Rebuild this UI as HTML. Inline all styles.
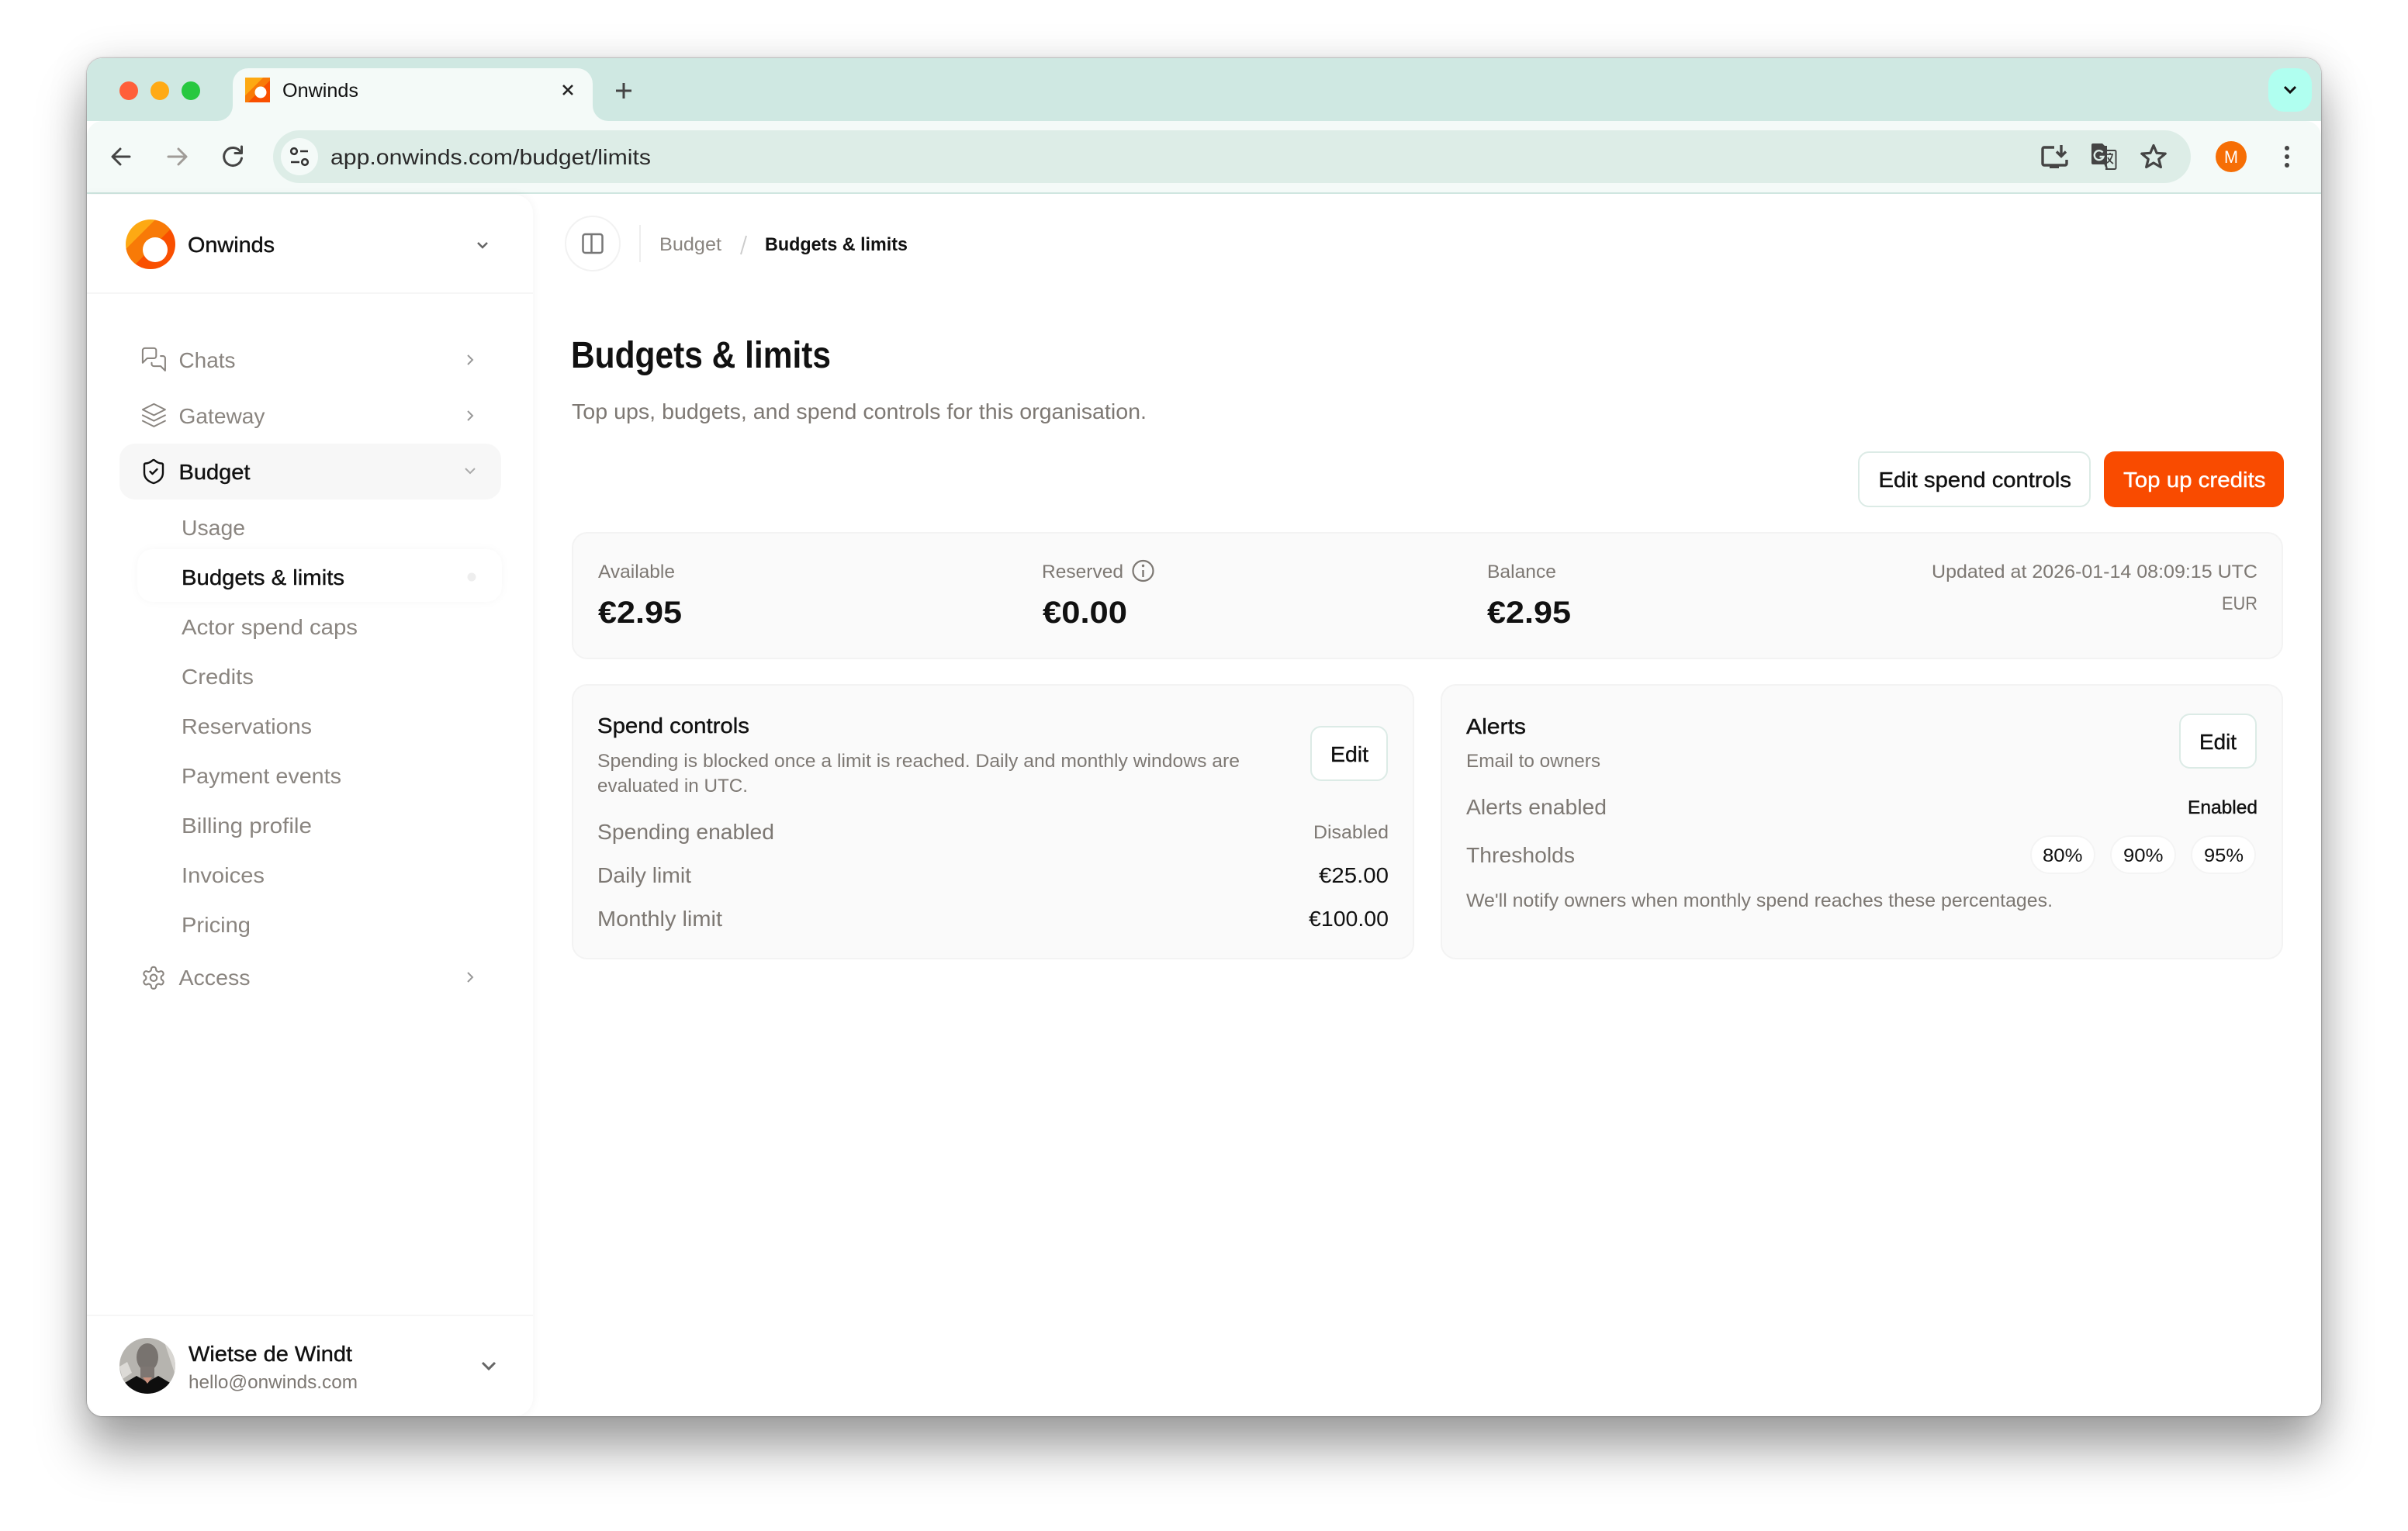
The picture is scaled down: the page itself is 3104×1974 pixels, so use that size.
<!DOCTYPE html>
<html lang="en">
<head>
<meta charset="utf-8">
<title>Onwinds</title>
<style>
html,body{margin:0;padding:0;background:#fff;width:3104px;height:1974px;overflow:hidden}
.a{position:absolute;box-sizing:border-box}
#shadow{left:112px;top:75px;width:2880px;height:1751px;border-radius:20px;box-shadow:0 0 0 1px rgba(0,0,0,.13),0 0 4px rgba(0,0,0,.16),0 44px 62px rgba(0,0,0,.34),0 4px 52px rgba(0,0,0,.13)}
#win{left:112px;top:75px;width:2880px;height:1751px;border-radius:20px;overflow:hidden;background:#fff}
svg{position:absolute;left:0;top:0}
text{font-family:"Liberation Sans",sans-serif;white-space:pre}
.m{stroke:currentColor;stroke-width:.4px}
.g{fill:#7d7873;color:#7d7873}
.n{fill:#8a8580;color:#8a8580}
.d{fill:#111;color:#111}
.s24{font-size:24px}.s28{font-size:28px}
.ic{fill:none;stroke-linecap:round;stroke-linejoin:round}
</style>
</head>
<body>
<div class="a" id="shadow"></div>
<div class="a" id="win">
  <div class="a" style="left:0;top:0;width:2880px;height:81px;background:#cfe8e2"></div>
  <div class="a" style="left:0;top:81px;width:2880px;height:94px;background:#f4faf8;border-radius:20px 20px 0 0;border-bottom:2px solid #cfe6e0"></div>
  <div class="a" style="left:188px;top:13px;width:464px;height:70px;background:#f4faf8;border-radius:20px 20px 0 0"></div>
  <div class="a" style="left:240px;top:93px;width:2472px;height:68px;background:#ddede7;border-radius:34px"></div>
  <div class="a" style="left:2812px;top:13px;width:56px;height:56px;background:#b0fff0;border-radius:20px"></div>
  <div class="a" style="left:0;top:176px;width:575px;height:1575px;background:#fff;border-radius:0 24px 24px 24px;box-shadow:0 0 12px rgba(0,0,0,.05)"></div>
  <div class="a" style="left:0;top:302px;width:575px;height:2px;background:#f6f6f6"></div>
  <div class="a" style="left:0;top:1620px;width:575px;height:2px;background:#f6f6f6"></div>
  <div class="a" style="left:42px;top:497px;width:492px;height:72px;background:#f7f7f7;border-radius:20px"></div>
  <div class="a" style="left:65px;top:633px;width:470px;height:68px;background:#fff;border-radius:20px;box-shadow:0 0 12px rgba(0,0,0,.035)"></div>
  <div class="a" style="left:616px;top:203px;width:72px;height:72px;background:#fff;border:2px solid #f2f2f2;border-radius:50%"></div>
  <div class="a" style="left:712px;top:215px;width:2px;height:48px;background:#eee"></div>
  <div class="a" style="left:2283px;top:507px;width:300px;height:72px;background:#fff;border:2px solid #dcebe6;border-radius:14px"></div>
  <div class="a" style="left:2600px;top:507px;width:232px;height:72px;background:#f94b00;border-radius:14px"></div>
  <div class="a" style="left:625px;top:611px;width:2206px;height:164px;background:#fafafa;border:2px solid #f3f3f3;border-radius:20px"></div>
  <div class="a" style="left:625px;top:807px;width:1086px;height:355px;background:#fafafa;border:2px solid #f3f3f3;border-radius:20px"></div>
  <div class="a" style="left:1745px;top:807px;width:1086px;height:355px;background:#fafafa;border:2px solid #f3f3f3;border-radius:20px"></div>
  <div class="a" style="left:1577px;top:861px;width:100px;height:71px;background:#fff;border:2px solid #dcebe6;border-radius:14px"></div>
  <div class="a" style="left:2697px;top:845px;width:100px;height:71px;background:#fff;border:2px solid #dcebe6;border-radius:14px"></div>
  <div class="a" style="left:2505px;top:1002px;width:84px;height:50px;background:#fff;border:2px solid #f4f4f4;border-radius:25px"></div>
  <div class="a" style="left:2608px;top:1002px;width:85px;height:50px;background:#fff;border:2px solid #f4f4f4;border-radius:25px"></div>
  <div class="a" style="left:2712px;top:1002px;width:84px;height:50px;background:#fff;border:2px solid #f4f4f4;border-radius:25px"></div>
</div>
<svg width="3104" height="1974" viewBox="0 0 3104 1974" xmlns="http://www.w3.org/2000/svg">
  <defs>
    <linearGradient id="lg" gradientUnits="userSpaceOnUse" x1="162" y1="283" x2="226" y2="347">
      <stop offset=".3" stop-color="#fda913"/><stop offset=".3" stop-color="#f87a07"/>
      <stop offset=".55" stop-color="#f87a07"/><stop offset=".55" stop-color="#f94f00"/>
    </linearGradient>
    <linearGradient id="fg" gradientUnits="userSpaceOnUse" x1="316" y1="100" x2="348" y2="132">
      <stop offset=".36" stop-color="#fda913"/><stop offset=".36" stop-color="#f87a07"/>
      <stop offset=".56" stop-color="#f87a07"/><stop offset=".56" stop-color="#f94f00"/>
    </linearGradient>
    <clipPath id="av"><circle cx="190" cy="1761" r="36"/></clipPath>
  </defs>

  <!-- tab strip flares -->
  <path d="M280 156a20 20 0 0 0 20-20v20z" fill="#f4faf8"/>
  <path d="M784 156a20 20 0 0 1-20-20v20z" fill="#f4faf8"/>

  <!-- traffic lights -->
  <circle cx="166" cy="117" r="12" fill="#ff5f3a"/>
  <circle cx="206" cy="117" r="12" fill="#ffaa15"/>
  <circle cx="246" cy="117" r="12" fill="#28c840"/>

  <!-- favicon and tab -->
  <rect x="316" y="100" width="32" height="32" fill="url(#fg)"/>
  <circle cx="336" cy="119" r="7.500" fill="#fff"/>
  <text x="364" y="125" class="d" style="font-size:25px" textLength="98" lengthAdjust="spacingAndGlyphs">Onwinds</text>
  <path d="M726 110l12 12M738 110l-12 12" stroke="#222" stroke-width="2.600" fill="none"/>
  <path d="M804 107v20M794 117h20" stroke="#444" stroke-width="3" fill="none"/>
  <path d="M2945 112l7 7 7-7" stroke="#111" stroke-width="3" fill="none"/>

  <!-- toolbar -->
  <g class="ic" stroke-width="3">
    <path d="M167 202H146M155 192l-10 10 10 10" stroke="#444"/>
    <path d="M239 202H217M230 192l10 10-10 10" stroke="#a09c98"/>
    <path d="M310 196a11.500 11.500 0 1 0 1.500 8" stroke="#444"/>
    <path d="M311.500 189v8.500H303" stroke="#444"/>
  </g>
  <circle cx="386" cy="202" r="24" fill="#f4faf8"/>
  <g fill="none" stroke="#333" stroke-width="2.600">
    <circle cx="379" cy="195" r="3.800"/>
    <path d="M387 195h10M375 209h11"/>
    <circle cx="393" cy="209" r="3.800"/>
  </g>
  <text x="426" y="212" fill="#2a2a2a" class="s28" textLength="413" lengthAdjust="spacingAndGlyphs">app.onwinds.com/budget/limits</text>

  <g fill="none" stroke="#444" stroke-width="3.400">
    <path d="M2648 190h-13a2 2 0 0 0-2 2v19a2 2 0 0 0 2 2h27a2 2 0 0 0 2-2v-5"/>
    <path d="M2657 187v14M2651 195.500l6 6 6-6"/>
  </g>
  <rect x="2642" y="212" width="12" height="5" fill="#444"/>
  <path d="M2696 187a2 2 0 0 1 2-2h12l3 3 3 0 0 3v21h-18a2 2 0 0 1-2-2z" fill="#444"/>
  <path d="M2712.500 194h13.500a1.500 1.500 0 0 1 1.500 1.500v21a1.500 1.500 0 0 1-1.500 1.500h-12" fill="none" stroke="#444" stroke-width="2"/>
  <path d="M2712 211l3 7h2l-1.500-7z" fill="#444"/>
  <path d="M2710.500 196.500a6 6 0 1 0 1 5.500h-5" fill="none" stroke="#ddede7" stroke-width="2.400"/>
  <path d="M2716 199h8M2720 197v2M2723 199c-1 5-4 9-7 11M2717 203c1.500 3 4 6 7 8" fill="none" stroke="#444" stroke-width="1.800"/>
  <polygon points="2776,187.500 2780.100,197.300 2791.200,198.100 2782.700,205.200 2785.400,215.500 2776,210 2766.600,215.500 2769.300,205.200 2760.800,198.100 2771.900,197.300" fill="none" stroke="#444" stroke-width="3.200" stroke-linejoin="round"/>
  <circle cx="2876" cy="202" r="20" fill="#f66e05"/>
  <text x="2867" y="210" fill="#fff" style="font-size:22px" textLength="18" lengthAdjust="spacingAndGlyphs">M</text>
  <circle cx="2948" cy="191" r="3" fill="#444"/><circle cx="2948" cy="202" r="3" fill="#444"/><circle cx="2948" cy="213" r="3" fill="#444"/>

  <!-- sidebar header -->
  <circle cx="194" cy="315" r="32" fill="url(#lg)"/>
  <circle cx="200" cy="322" r="16" fill="#fff"/>
  <text x="242" y="325" class="d s28 m" textLength="112" lengthAdjust="spacingAndGlyphs">Onwinds</text>
  <path d="M616 313l6 6 6-6" fill="none" stroke="#666" stroke-width="2.500"/>

  <!-- nav -->
  <g class="ic" stroke="#8a8580" stroke-width="1.400" transform="translate(181 446) scale(1.45)">
    <path d="M14 9a2 2 0 0 1-2 2H6l-4 4V4a2 2 0 0 1 2-2h8a2 2 0 0 1 2 2z"/>
    <path d="M18 9h2a2 2 0 0 1 2 2v11l-4-4h-6a2 2 0 0 1-2-2v-1"/>
  </g>
  <text x="230.500" y="474" class="n s28" textLength="73" lengthAdjust="spacingAndGlyphs">Chats</text>
  <path d="M603 458l6 6-6 6" fill="none" stroke="#999" stroke-width="2"/>

  <g class="ic" stroke="#8a8580" stroke-width="1.400" transform="translate(181 518) scale(1.45)">
    <path d="M12 2L22 7L12 12L2 7Z"/><path d="M2 12l10 5 10-5"/><path d="M2 17l10 5 10-5"/>
  </g>
  <text x="230.500" y="546" class="n s28" textLength="111" lengthAdjust="spacingAndGlyphs">Gateway</text>
  <path d="M603 530l6 6-6 6" fill="none" stroke="#999" stroke-width="2"/>

  <g class="ic" stroke="#111" stroke-width="1.600" transform="translate(180 590) scale(1.5)">
    <path d="M20 13c0 5-3.500 7.500-7.660 8.950a1 1 0 0 1-.67-.01C7.500 20.500 4 18 4 13V6a1 1 0 0 1 1-1c2 0 4.500-1.200 6.240-2.720a1.170 1.170 0 0 1 1.520 0C14.510 3.810 17 5 19 5a1 1 0 0 1 1 1z"/>
    <path d="M9 12l2 2 4-4"/>
  </g>
  <text x="230.500" y="618" class="d s28 m" textLength="92" lengthAdjust="spacingAndGlyphs">Budget</text>
  <path d="M600 604l6 6 6-6" fill="none" stroke="#aaa" stroke-width="2"/>

  <text x="234" y="690" class="n s28" textLength="82" lengthAdjust="spacingAndGlyphs">Usage</text>
  <text x="234" y="754" class="d s28 m" textLength="210" lengthAdjust="spacingAndGlyphs">Budgets &amp; limits</text>
  <circle cx="608" cy="744" r="5.500" fill="#eee"/>
  <text x="234" y="818" class="n s28" textLength="227" lengthAdjust="spacingAndGlyphs">Actor spend caps</text>
  <text x="234" y="882" class="n s28" textLength="93" lengthAdjust="spacingAndGlyphs">Credits</text>
  <text x="234" y="946" class="n s28" textLength="168" lengthAdjust="spacingAndGlyphs">Reservations</text>
  <text x="234" y="1010" class="n s28" textLength="206" lengthAdjust="spacingAndGlyphs">Payment events</text>
  <text x="234" y="1074" class="n s28" textLength="168" lengthAdjust="spacingAndGlyphs">Billing profile</text>
  <text x="234" y="1138" class="n s28" textLength="107" lengthAdjust="spacingAndGlyphs">Invoices</text>
  <text x="234" y="1202" class="n s28" textLength="89" lengthAdjust="spacingAndGlyphs">Pricing</text>

  <g class="ic" stroke="#8a8580" stroke-width="1.500" transform="translate(181.200 1244) scale(1.4)">
    <path d="M12.220 2h-.44a2 2 0 0 0-2 2v.18a2 2 0 0 1-1 1.730l-.43.25a2 2 0 0 1-2 0l-.15-.08a2 2 0 0 0-2.730.73l-.22.38a2 2 0 0 0 .73 2.730l.15.1a2 2 0 0 1 1 1.720v.51a2 2 0 0 1-1 1.740l-.15.09a2 2 0 0 0-.73 2.730l.22.38a2 2 0 0 0 2.730.73l.15-.08a2 2 0 0 1 2 0l.43.25a2 2 0 0 1 1 1.730V20a2 2 0 0 0 2 2h.44a2 2 0 0 0 2-2v-.18a2 2 0 0 1 1-1.730l.43-.25a2 2 0 0 1 2 0l.15.08a2 2 0 0 0 2.730-.73l.22-.39a2 2 0 0 0-.73-2.730l-.15-.08a2 2 0 0 1-1-1.740v-.5a2 2 0 0 1 1-1.740l.15-.09a2 2 0 0 0 .73-2.730l-.22-.38a2 2 0 0 0-2.730-.73l-.15.08a2 2 0 0 1-2 0l-.43-.25a2 2 0 0 1-1-1.730V4a2 2 0 0 0-2-2z"/>
    <circle cx="12" cy="12" r="3"/>
  </g>
  <text x="230.500" y="1270" class="n s28" textLength="92" lengthAdjust="spacingAndGlyphs">Access</text>
  <path d="M603 1254l6 6-6 6" fill="none" stroke="#999" stroke-width="2"/>

  <!-- user footer -->
  <g clip-path="url(#av)">
    <rect x="154" y="1725" width="72" height="72" fill="#b6b4af"/>
    <path d="M210 1725h16v48z" fill="#d8d6d2"/>
    <path d="M154 1762l10-6 6 14-12 8z" fill="#dcdad6"/>
    <ellipse cx="190" cy="1750" rx="14" ry="18" fill="#78736f"/>
    <rect x="181" y="1762" width="18" height="18" fill="#7d7672"/>
    <path d="M154 1797v-10l22-13 14 8 14-8 22 13v10z" fill="#0e0e0e"/>
    <path d="M184 1776l6 8 6-8z" fill="#c9917e"/>
  </g>
  <text x="243" y="1755" class="d s28 m" textLength="211" lengthAdjust="spacingAndGlyphs">Wietse de Windt</text>
  <text x="243" y="1790" class="g s24" textLength="218" lengthAdjust="spacingAndGlyphs">hello@onwinds.com</text>
  <path d="M622 1757l8 8 8-8" fill="none" stroke="#666" stroke-width="3"/>

  <!-- top bar -->
  <rect x="751.500" y="302" width="25" height="24" rx="3" fill="none" stroke="#777" stroke-width="2.500"/>
  <path d="M762.500 302v24" stroke="#777" stroke-width="2.500"/>
  <text x="850" y="323" class="n s24" textLength="80" lengthAdjust="spacingAndGlyphs">Budget</text>
  <path d="M962 304l-7 24" stroke="#ccc" stroke-width="2"/>
  <text x="986" y="323" class="d s24" font-weight="700" textLength="184" lengthAdjust="spacingAndGlyphs">Budgets &amp; limits</text>

  <!-- heading -->
  <text x="736" y="474" class="d" font-weight="700" style="font-size:48px" textLength="335" lengthAdjust="spacingAndGlyphs">Budgets &amp; limits</text>
  <text x="737" y="540" class="g s28" textLength="741" lengthAdjust="spacingAndGlyphs">Top ups, budgets, and spend controls for this organisation.</text>

  <!-- actions -->
  <text x="2421.500" y="628" class="d s28 m" textLength="248.500" lengthAdjust="spacingAndGlyphs">Edit spend controls</text>
  <text x="2737" y="628" fill="#fff" color="#fff" class="s28 m" textLength="183.500" lengthAdjust="spacingAndGlyphs">Top up credits</text>

  <!-- stats -->
  <text x="771" y="745" class="g s24" textLength="99" lengthAdjust="spacingAndGlyphs">Available</text>
  <text x="771" y="803" class="d" font-weight="700" style="font-size:40px" textLength="108" lengthAdjust="spacingAndGlyphs">€2.95</text>
  <text x="1343" y="745" class="g s24" textLength="105" lengthAdjust="spacingAndGlyphs">Reserved</text>
  <circle cx="1473.500" cy="736" r="13" fill="none" stroke="#7d7873" stroke-width="2.200"/>
  <path d="M1473.500 735v9" stroke="#7d7873" stroke-width="2.400"/>
  <circle cx="1473.500" cy="729.500" r="1.700" fill="#7d7873"/>
  <text x="1344" y="803" class="d" font-weight="700" style="font-size:40px" textLength="109" lengthAdjust="spacingAndGlyphs">€0.00</text>
  <text x="1917" y="745" class="g s24" textLength="89" lengthAdjust="spacingAndGlyphs">Balance</text>
  <text x="1917" y="803" class="d" font-weight="700" style="font-size:40px" textLength="108" lengthAdjust="spacingAndGlyphs">€2.95</text>
  <text x="2490" y="745" class="g s24" textLength="420" lengthAdjust="spacingAndGlyphs">Updated at 2026-01-14 08:09:15 UTC</text>
  <text x="2864" y="786" class="g s24" textLength="46" lengthAdjust="spacingAndGlyphs">EUR</text>

  <!-- spend controls -->
  <text x="770" y="945" class="d s28 m" textLength="196" lengthAdjust="spacingAndGlyphs">Spend controls</text>
  <text x="770" y="989" class="g s24" textLength="828" lengthAdjust="spacingAndGlyphs">Spending is blocked once a limit is reached. Daily and monthly windows are</text>
  <text x="770" y="1021" class="g s24" textLength="194" lengthAdjust="spacingAndGlyphs">evaluated in UTC.</text>
  <text x="1715" y="982" class="d s28 m" textLength="49" lengthAdjust="spacingAndGlyphs">Edit</text>
  <text x="770" y="1082" class="g s28" textLength="228" lengthAdjust="spacingAndGlyphs">Spending enabled</text>
  <text x="1693" y="1081" class="g s24" textLength="97" lengthAdjust="spacingAndGlyphs">Disabled</text>
  <text x="770" y="1138" class="g s28" textLength="121" lengthAdjust="spacingAndGlyphs">Daily limit</text>
  <text x="1700" y="1138" class="d s28" textLength="90" lengthAdjust="spacingAndGlyphs">€25.00</text>
  <text x="770" y="1194" class="g s28" textLength="161" lengthAdjust="spacingAndGlyphs">Monthly limit</text>
  <text x="1687" y="1194" class="d s28" textLength="103" lengthAdjust="spacingAndGlyphs">€100.00</text>

  <!-- alerts -->
  <text x="1890" y="946" class="d s28 m" textLength="77" lengthAdjust="spacingAndGlyphs">Alerts</text>
  <text x="1890" y="989" class="g s24" textLength="173" lengthAdjust="spacingAndGlyphs">Email to owners</text>
  <text x="2835" y="966" class="d s28 m" textLength="48" lengthAdjust="spacingAndGlyphs">Edit</text>
  <text x="1890" y="1050" class="g s28" textLength="181" lengthAdjust="spacingAndGlyphs">Alerts enabled</text>
  <text x="2820" y="1049" class="d s24 m" textLength="90" lengthAdjust="spacingAndGlyphs">Enabled</text>
  <text x="1890" y="1112" class="g s28" textLength="140" lengthAdjust="spacingAndGlyphs">Thresholds</text>
  <text x="2633" y="1111" class="d s24" textLength="51.500" lengthAdjust="spacingAndGlyphs">80%</text>
  <text x="2737" y="1111" class="d s24" textLength="51.500" lengthAdjust="spacingAndGlyphs">90%</text>
  <text x="2841" y="1111" class="d s24" textLength="51" lengthAdjust="spacingAndGlyphs">95%</text>
  <text x="1890" y="1169" class="g s24" textLength="756" lengthAdjust="spacingAndGlyphs">We'll notify owners when monthly spend reaches these percentages.</text>
</svg>
</body>
</html>
